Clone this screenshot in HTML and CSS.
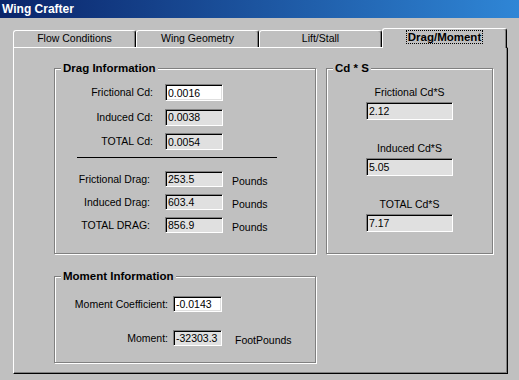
FILE: index.html
```html
<!DOCTYPE html>
<html>
<head>
	<title>Wing Crafter</title>
	<meta charset="utf-8">
<link rel="stylesheet" href="styles.css">
</head>
<body>
<div class="titlebar">Wing Crafter</div>

<div class="tabs">
	<div class="tab">Flow Conditions</div>
	<div class="tab">Wing Geometry</div>
	<div class="tab">Lift/Stall</div>
	<div class="tab active"><span class="focus">Drag/Moment</span></div>
</div>

<div class="panel">
	<div class="groups">
		<fieldset class="group">
			<legend>Drag Information</legend>
			<div class="cdrows">
				<label>Frictional Cd:</label>
				<input type="text" class="campo editavel" value="0.0016">
				<label>Induced Cd:</label>
				<input type="text" class="campo" value="0.0038" readonly="readonly">
				<label>TOTAL Cd:</label>
				<input type="text" class="campo" value="0.0054" readonly="readonly">
			</div>
			<div class="linha"></div>
			<div class="dragrows">
				<label>Frictional Drag:</label>
				<input type="text" class="campo" value="253.5" readonly="readonly">
				<span class="unidade">Pounds</span>
				<label>Induced Drag:</label>
				<input type="text" class="campo" value="603.4" readonly="readonly">
				<span class="unidade">Pounds</span>
				<label>TOTAL DRAG:</label>
				<input type="text" class="campo" value="856.9" readonly="readonly">
				<span class="unidade">Pounds</span>
			</div>
		</fieldset>

		<fieldset class="group cds">
			<legend>Cd * S</legend>
			<div class="bloco">
				<label>Frictional Cd*S</label>
				<input type="text" class="campo" value="2.12" readonly="readonly">
			</div>
			<div class="bloco">
				<label>Induced Cd*S</label>
				<input type="text" class="campo" value="5.05" readonly="readonly">
			</div>
			<div class="bloco">
				<label>TOTAL Cd*S</label>
				<input type="text" class="campo" value="7.17" readonly="readonly">
			</div>
		</fieldset>

		<fieldset class="group">
			<legend>Moment Information</legend>
			<div class="momrows">
				<label>Moment Coefficient:</label>
				<input type="text" class="campo editavel" value="-0.0143">
				<span></span>
				<label>Moment:</label>
				<input type="text" class="campo" value="-32303.3" readonly="readonly">
				<span class="unidade">FootPounds</span>
			</div>
		</fieldset>
	</div>
</div>
</body>
</html>
```

FILE: styles.css
```css
	body{
		margin: 0;
		width: 519px;
		height: 380px;
		overflow: hidden;
		background: #c0c0c0;
		font-family: "Liberation Sans", Arial, sans-serif;
		font-size: 10.5px;
		color: #000;
	}
	.titlebar{
		height: 18px;
		line-height: 18px;
		padding-left: 2px;
		background: linear-gradient(to right, #0a246a, #2f86d6);
		color: #fff;
		font-weight: bold;
		font-size: 12px;
	}
	.tabs{
		display: flex;
		height: 17px;
		margin: 12px 0 0 13px;
	}
	.tab{
		flex: 0 0 123px;
		box-sizing: border-box;
		height: 17px;
		border: 1px solid #fff;
		border-bottom: none;
		border-right-color: #000;
		border-radius: 3px 3px 0 0;
		box-shadow: inset -1px 0 0 #808080;
		text-align: center;
		line-height: 15px;
	}
	.tab.active{
		flex-basis: 125px;
		height: 20px;
		margin-top: -2px;
		position: relative;
		z-index: 1;
		background: #c0c0c0;
		font-weight: bold;
		font-size: 11.5px;
		line-height: 17px;
	}
	.focus{
		border: 1px dotted #000;
		padding: 0 1px;
	}
	.panel{
		box-sizing: border-box;
		width: 495px;
		height: 327px;
		margin-left: 13px;
		border: 1px solid #fff;
		border-right-color: #000;
		border-bottom-color: #000;
		box-shadow: inset -1px -1px 0 #808080;
		padding: 14px 0 0 40px;
	}
	.groups{
		display: grid;
		grid-template-columns: 262px 167px;
		column-gap: 10px;
		row-gap: 16px;
	}
	.group{
		margin: 0;
		padding: 0 0 18px 0;
		min-width: 0;
		border: 1px solid #808080;
		box-shadow: 1px 1px 0 #fff, inset 1px 1px 0 #fff;
	}
	legend{
		margin-left: 6px;
		padding: 0 2px;
		background: #c0c0c0;
		font-weight: bold;
		font-size: 11.5px;
		line-height: 13px;
		text-align: left;
	}
	.campo{
		box-sizing: border-box;
		height: 17px;
		margin: 0;
		padding: 0 2px;
		border: 1px solid;
		border-color: #808080 #fff #fff #808080;
		box-shadow: inset 1px 1px 0 #000, inset -1px -1px 0 #dfdfdf;
		background: #e0e0e0;
		font-family: inherit;
		font-size: 10.5px;
		color: #000;
		outline: none;
	}
	.editavel{
		background: #fff;
	}
	label{
		line-height: 17px;
	}
	.cdrows{
		display: grid;
		grid-template-columns: 98px 58px;
		column-gap: 12px;
		row-gap: 7.5px;
		margin-top: 9px;
	}
	.cdrows label{
		text-align: right;
	}
	.linha{
		height: 1px;
		background: #000;
		margin: 7px 38px 0 22px;
	}
	.dragrows{
		display: grid;
		grid-template-columns: 110px 58px auto;
		row-gap: 5px;
		margin-top: 13px;
	}
	.dragrows label, .momrows label{
		text-align: right;
		padding-right: 15px;
		line-height: 16px;
	}
	.dragrows .campo, .momrows .campo{
		height: 16px;
	}
	.unidade{
		padding: 2px 0 0 9px;
		line-height: 16px;
	}
	.bloco{
		margin-top: 22px;
		text-align: center;
	}
	.bloco:first-of-type{
		margin-top: 11px;
	}
	.bloco label{
		display: block;
		line-height: 13px;
	}
	.bloco .campo{
		width: 87px;
		height: 18px;
		margin-top: 3px;
	}
	.momrows{
		display: grid;
		grid-template-columns: 118px 49px auto;
		row-gap: 18px;
		margin-top: 13px;
	}
	.momrows label{
		padding-right: 5px;
	}
	.momrows .unidade{
		padding-left: 13px;
	}
	.group:last-child{
		padding-bottom: 14px;
	}
```
